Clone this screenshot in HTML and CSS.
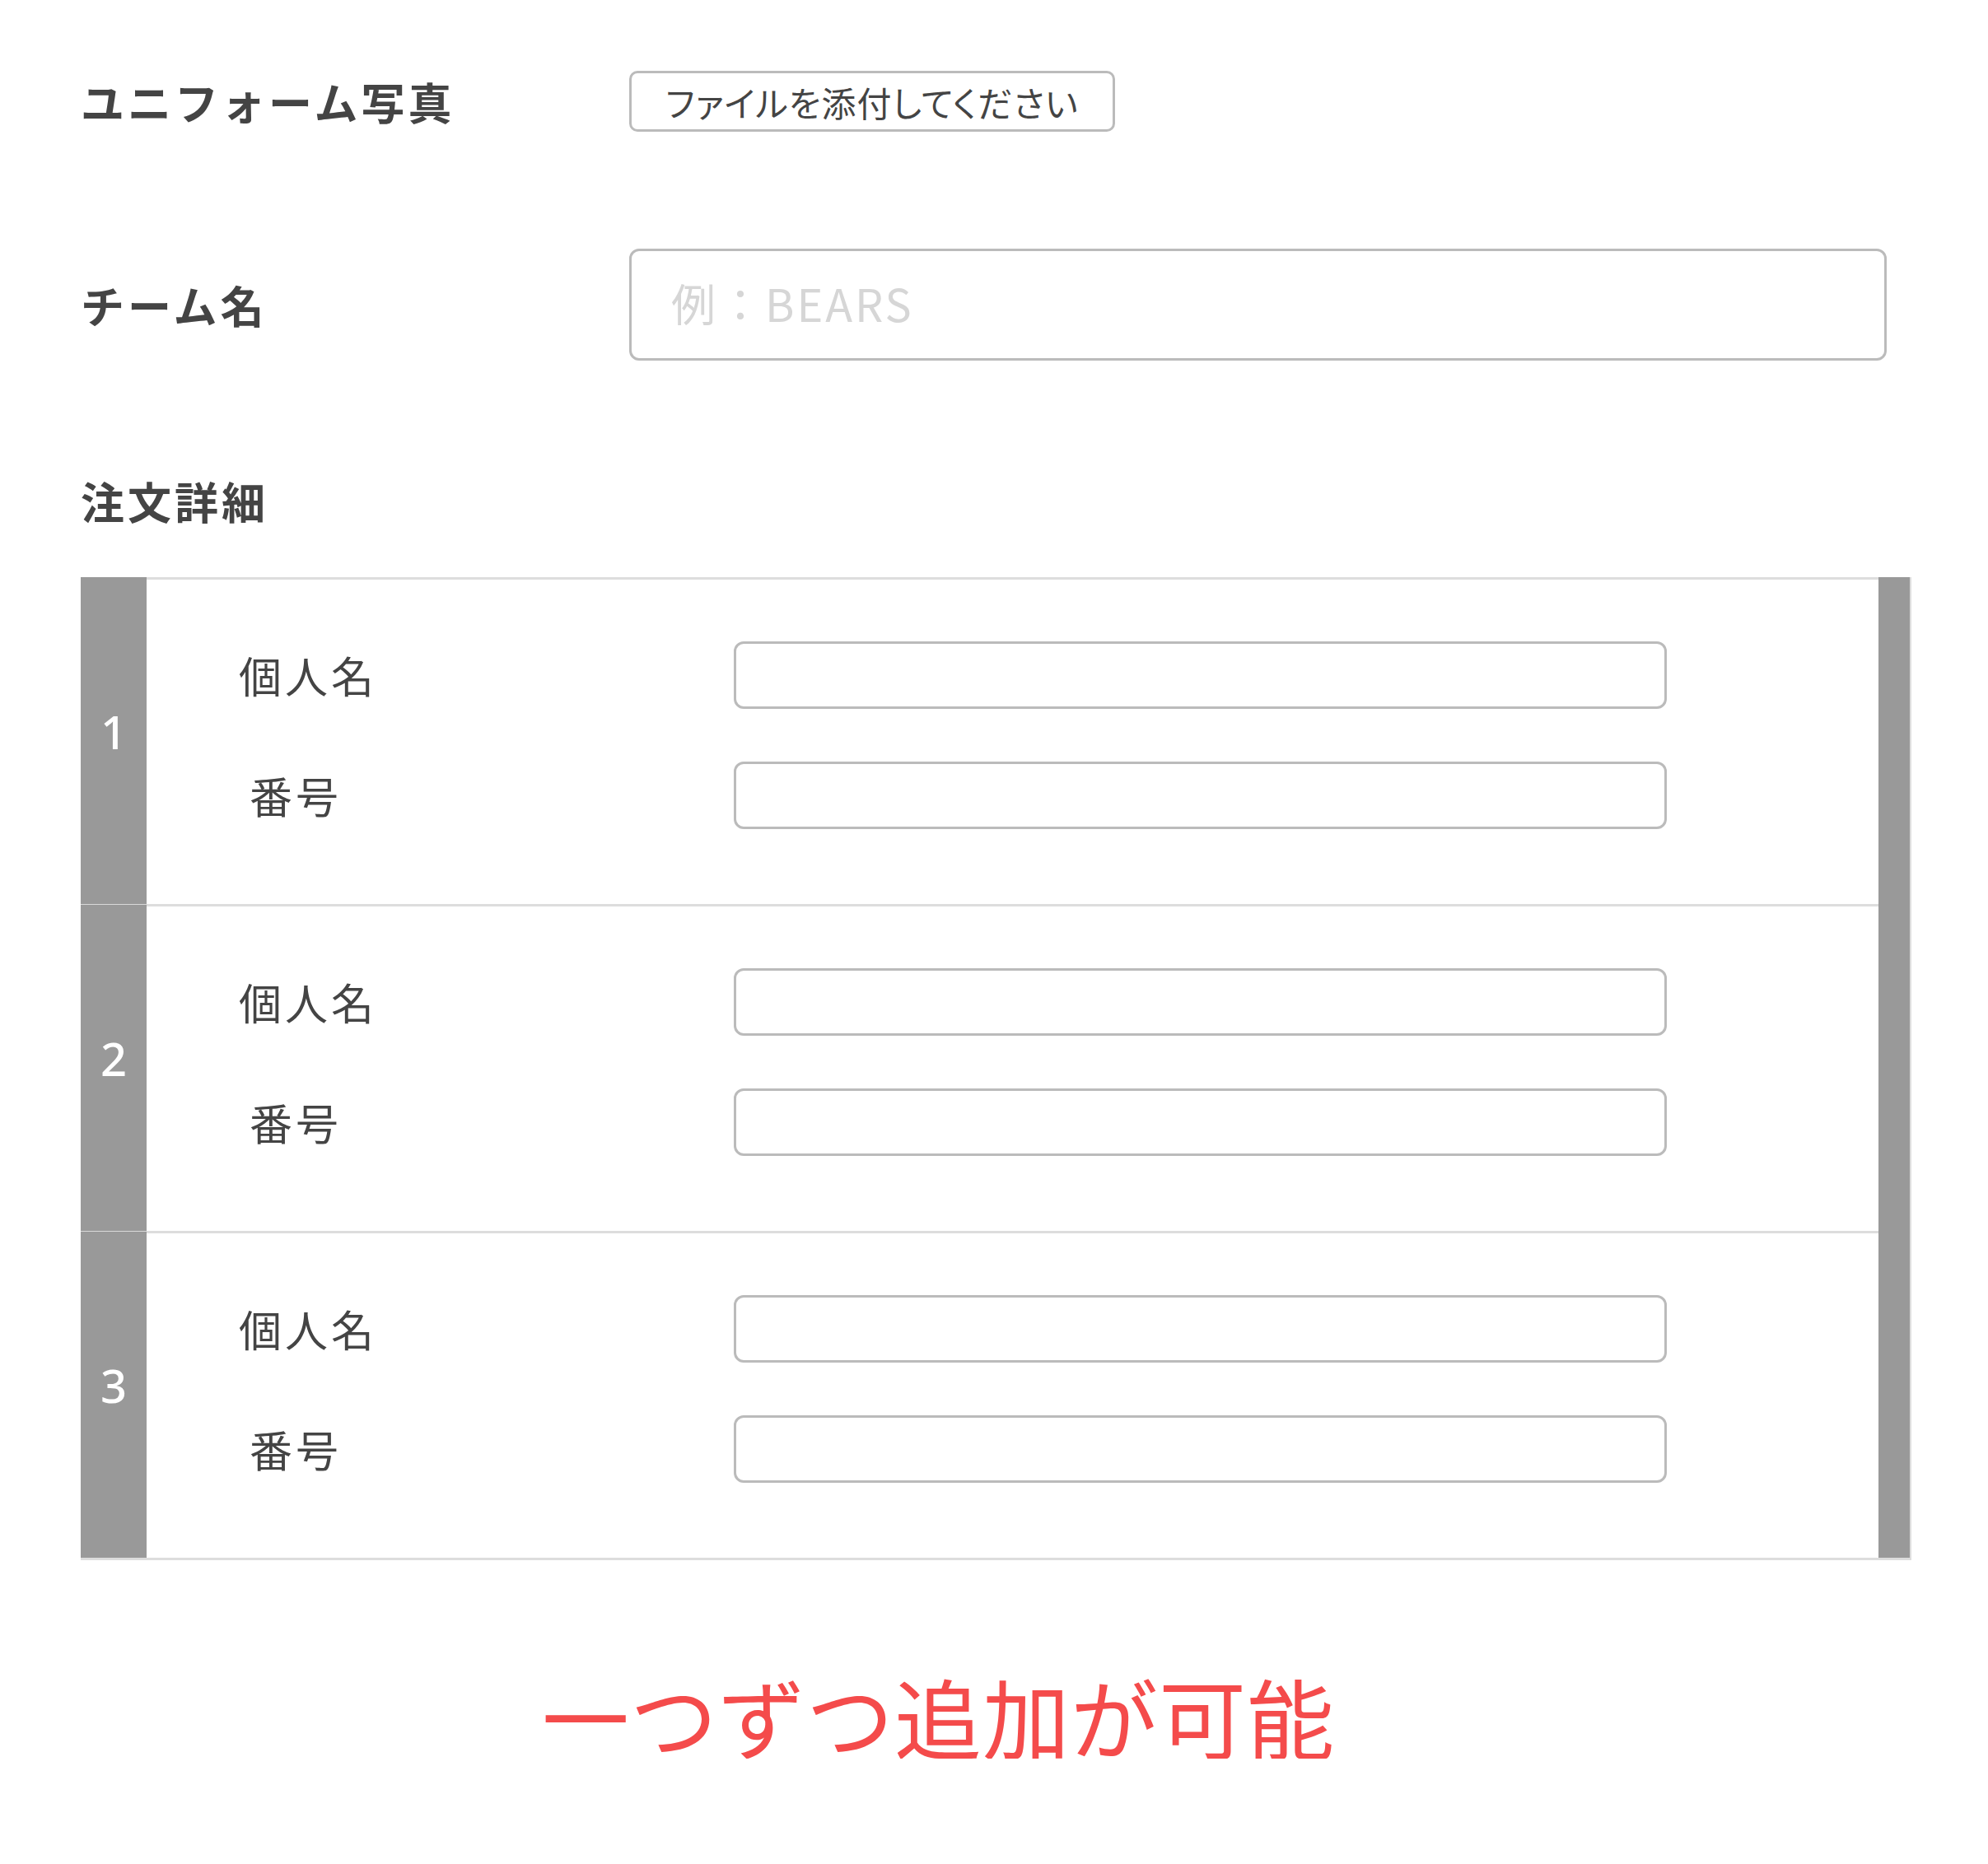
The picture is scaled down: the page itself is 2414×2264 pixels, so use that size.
FILE: index.html
```html
<!DOCTYPE html>
<html lang="ja">
<head>
    <meta charset="utf-8">
    <title>ユニフォーム注文</title>
    <link rel="stylesheet" href="styles.css">
</head>
<body>
    <form class="order-form">
        <div class="form-row photo-row">
            <div class="form-label">ユニフォーム写真</div>
            <label class="file-btn">
                <input type="file" class="file-input">
                ファイルを添付してください
            </label>
        </div>

        <div class="form-row team-row">
            <div class="form-label">チーム名</div>
            <input type="text" class="team-input" placeholder="例：BEARS">
        </div>

        <h2 class="section-title">注文詳細</h2>

        <div class="order-table">
            <div class="order-row">
                <div class="order-num">1</div>
                <div class="order-body">
                    <div class="order-line">
                        <span class="order-label">個人名</span>
                        <input type="text" class="order-input">
                    </div>
                    <div class="order-line">
                        <span class="order-label order-label-short">番号</span>
                        <input type="text" class="order-input">
                    </div>
                </div>
                <div class="order-bar"></div>
            </div>
            <div class="order-row">
                <div class="order-num">2</div>
                <div class="order-body">
                    <div class="order-line">
                        <span class="order-label">個人名</span>
                        <input type="text" class="order-input">
                    </div>
                    <div class="order-line">
                        <span class="order-label order-label-short">番号</span>
                        <input type="text" class="order-input">
                    </div>
                </div>
                <div class="order-bar"></div>
            </div>
            <div class="order-row">
                <div class="order-num">3</div>
                <div class="order-body">
                    <div class="order-line">
                        <span class="order-label">個人名</span>
                        <input type="text" class="order-input">
                    </div>
                    <div class="order-line">
                        <span class="order-label order-label-short">番号</span>
                        <input type="text" class="order-input">
                    </div>
                </div>
                <div class="order-bar"></div>
            </div>
        </div>

        <p class="note">一つずつ追加が可能</p>
    </form>
</body>
</html>
```

FILE: styles.css
```css
body {
    margin: 0;
    background: #fff;
    color: #444;
    font-family: "Noto Sans CJK JP", "Noto Sans", sans-serif;
}

.order-form {
    width: 2223px;
    padding: 86px 0 0 98px;
}

/* 上部の入力行 */
.form-row {
    display: flex;
    align-items: center;
}

.team-row {
    margin-top: 142px;
}

.form-label {
    width: 666px;
    flex-shrink: 0;
    font-size: 53px;
    font-weight: bold;
    letter-spacing: 4px;
    line-height: 1;
}

.file-btn {
    display: flex;
    align-items: center;
    justify-content: center;
    box-sizing: border-box;
    width: 590px;
    height: 74px;
    border: 3px solid #bbb;
    border-radius: 10px;
    font-size: 42px;
    font-feature-settings: "palt";
    letter-spacing: 1px;
    color: #444;
    cursor: pointer;
}

.file-input {
    display: none;
}

.team-input {
    box-sizing: border-box;
    width: 1527px;
    height: 136px;
    padding: 0 0 6px 48px;
    border: 3px solid #bbb;
    border-radius: 12px;
    font-family: inherit;
    font-size: 54px;
    letter-spacing: 3px;
    color: #444;
    outline: none;
}

.team-input::placeholder {
    color: #d6d6d6;
}

.section-title {
    margin: 144px 0 67px;
    font-size: 53px;
    font-weight: bold;
    letter-spacing: 4px;
    line-height: 52px;
}

/* 注文詳細テーブル */
.order-table {
    border-bottom: 3px solid #ddd;
    border-right: 2px solid #ddd;
}

.order-row {
    display: flex;
    height: 397px;
}

.order-num {
    display: flex;
    align-items: center;
    justify-content: center;
    width: 80px;
    flex-shrink: 0;
    padding-bottom: 24px;
    box-sizing: border-box;
    background: #999;
    color: #fff;
    font-family: "Noto Sans", sans-serif;
    font-size: 56px;
    font-weight: 500;
}

.order-row + .order-row .order-num {
    border-top: 1px solid #d9d9d9;
}

.order-body {
    flex: 1;
    display: flex;
    flex-direction: column;
    gap: 64px;
    padding-top: 75px;
    border-top: 3px solid #ddd;
}

.order-line {
    display: flex;
    align-items: center;
}

.order-label {
    width: 601px;
    padding-left: 112px;
    font-size: 52px;
    letter-spacing: 4px;
    line-height: 1;
}

.order-label-short {
    width: 588px;
    padding-left: 125px;
}

.order-input {
    box-sizing: border-box;
    width: 1133px;
    height: 82px;
    border: 3px solid #bbb;
    border-radius: 12px;
    font-size: 40px;
    outline: none;
}

.order-bar {
    width: 38px;
    flex-shrink: 0;
    background: #999;
}

.note {
    margin: 135px 0 0;
    padding-left: 560px;
    color: #f44b4b;
    font-size: 106px;
    letter-spacing: 1px;
    line-height: 106px;
}
```
